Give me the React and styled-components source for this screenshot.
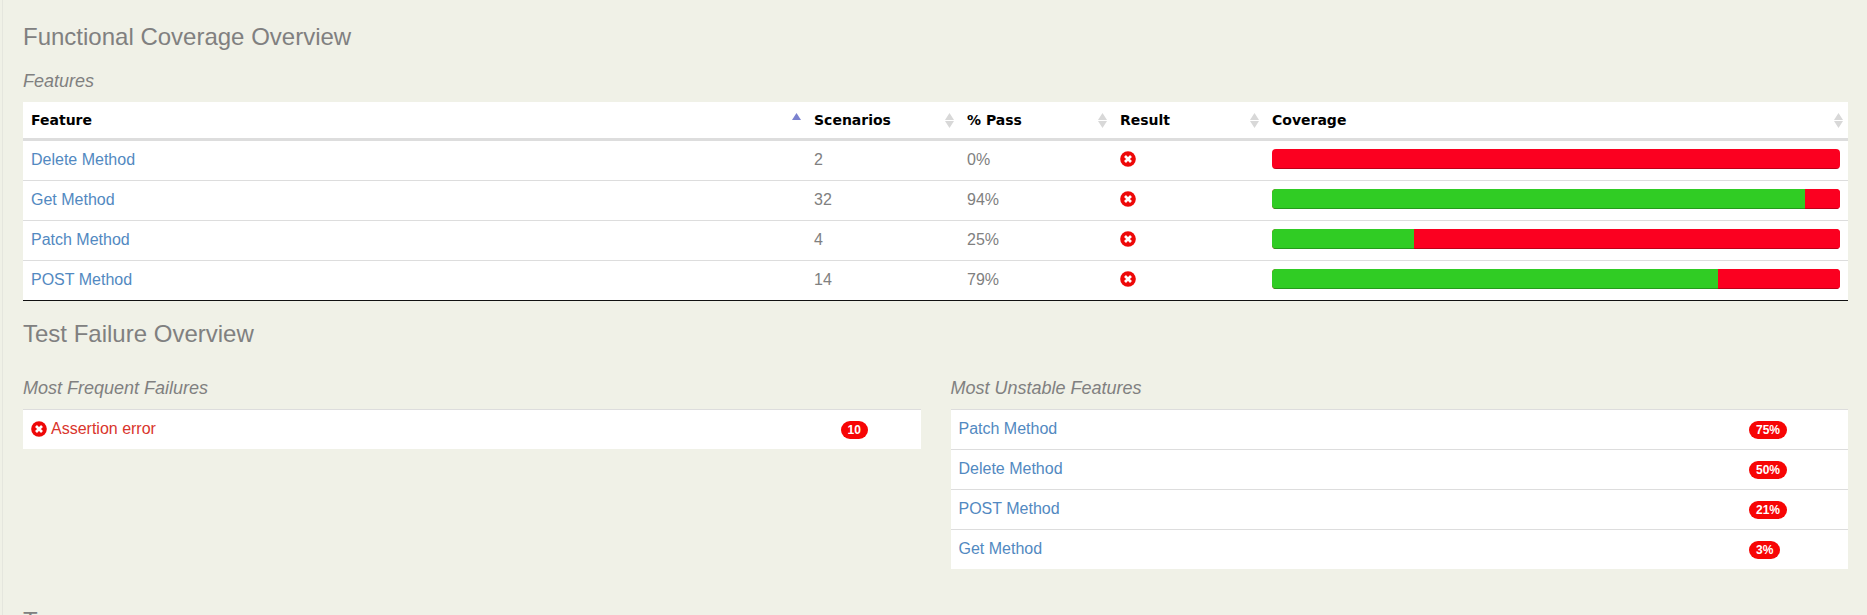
import React, { useState } from "react";
import styled, { createGlobalStyle } from "styled-components";

const GlobalStyle = createGlobalStyle`
  *, *::before, *::after { box-sizing: border-box; }
  html, body { height: 100%; overflow: hidden; }
  body {
    margin: 0;
    background: #f0f1e7;
    color: #808080;
    font: 16px/23px "Liberation Sans", Arial, sans-serif;
  }
  #root { height: 100%; }
`;

const Page = styled.main`
  min-height: 100%;
  margin-left: 2px;
  padding: 23px 19px 0 20px;
  border-left: 1px solid #e5e6de;
`;

const Section = styled.section`
  padding-bottom: ${(p) => p.$space || 0}px;
`;

const Title = styled.h3`
  margin: 0 0 ${(p) => p.$gap}px;
  font-size: 24px;
  line-height: 28px;
  font-weight: 400;
`;

const Subtitle = styled.h4`
  margin: 0 0 11px;
  font-size: 18px;
  line-height: 20px;
  font-weight: 400;
  font-style: italic;
`;

const Table = styled.table`
  width: 100%;
  table-layout: fixed;
  border-collapse: separate;
  border-spacing: 0;
  background: #fff;
`;

const CoverageTable = styled(Table)`
  border-bottom: 1px solid #111;

  tbody tr + tr td { border-top: 1px solid #ddd; }
`;

const RankTable = styled(Table)`
  td { border-top: 1px solid #ddd; }
`;

const Col = styled.col`
  width: ${(p) => p.$width};
`;

const HeadCell = styled.th`
  padding: 0;
  border-bottom: 3px solid #ddd;
`;

const SortButton = styled.button`
  display: flex;
  align-items: center;
  justify-content: space-between;
  width: 100%;
  height: 36px;
  padding: 0 5px 0 8px;
  border: 0;
  background: none;
  color: #000;
  font: bold 14px/20px "DejaVu Sans", Verdana, sans-serif;
  text-align: left;
  cursor: pointer;
`;

const Cell = styled.td`
  padding: 8px 8px 10px;
  line-height: 21px;
  vertical-align: top;
`;

const FeatureLink = styled.a`
  color: #5289c1;
  text-decoration: none;

  &:hover { text-decoration: underline; }
`;

const FailureLink = styled(FeatureLink)`
  display: flex;
  align-items: center;
  gap: 4px;
  color: #d9352c;
`;

const Bar = styled.div`
  display: flex;
  height: 20px;
  overflow: hidden;
  border-radius: 4px;
  background: #fb0020;
`;

const BarPart = styled.div`
  flex: ${(p) => p.$share} 0 0;
  background: ${(p) => p.$color};
  box-shadow: inset 0 -1px 0 rgba(0, 0, 0, 0.25);
`;

const Columns = styled.div`
  display: grid;
  grid-template-columns: 1fr 1fr;
  gap: 30px;
  align-items: start;
`;

const Badge = styled.span`
  display: inline-block;
  padding: 3px 7px;
  border-radius: 10px;
  background: #f70505;
  color: #fff;
  font-size: 12px;
  line-height: 12px;
  font-weight: 700;
  vertical-align: middle;
`;

const FailSvg = styled.svg`
  display: block;
  width: 16px;
  height: 16px;
`;

const ResultIcon = styled.span`
  display: flex;
  align-items: center;
  height: 20px;
`;

function FailIcon() {
  return (
    <FailSvg viewBox="0 0 16 16" aria-label="Failure" role="img">
      <circle cx="8" cy="8" r="7.8" fill="#ee0808" />
      <path d="M5 5l6 6M11 5l-6 6" fill="none" stroke="#fff" strokeWidth="2.7" />
    </FailSvg>
  );
}

function SortIcon({ direction }) {
  return (
    <svg width="9" height="15" viewBox="0 0 9 15" aria-hidden="true">
      {direction !== "descending" && (
        <path d="M4.5 0L9 7H0z" fill={direction ? "#7b82cf" : "#d8d8d8"} />
      )}
      {direction !== "ascending" && (
        <path d="M4.5 15L9 8H0z" fill={direction ? "#7b82cf" : "#d8d8d8"} />
      )}
    </svg>
  );
}

const columns = [
  { key: "name", label: "Feature", width: "auto" },
  { key: "total", label: "Scenarios", width: "153px" },
  { key: "rate", label: "% Pass", width: "153px" },
  { key: "result", label: "Result", width: "152px" },
  { key: "coverage", label: "Coverage", width: "32%" },
];

const features = [
  { name: "Delete Method", total: 2, passed: 0 },
  { name: "Get Method", total: 32, passed: 30 },
  { name: "Patch Method", total: 4, passed: 1 },
  { name: "POST Method", total: 14, passed: 11 },
];

const unstable = [
  ["Patch Method", "75%"],
  ["Delete Method", "50%"],
  ["POST Method", "21%"],
  ["Get Method", "3%"],
];

function sortValue(feature, key) {
  if (key === "name") return feature.name.toLowerCase();
  if (key === "total") return feature.total;
  return feature.passed / feature.total;
}

export default function App() {
  const [sort, setSort] = useState({ key: "name", direction: "ascending" });

  const rows = [...features].sort((a, b) => {
    const x = sortValue(a, sort.key);
    const y = sortValue(b, sort.key);
    const order = x < y ? -1 : x > y ? 1 : 0;
    return sort.direction === "ascending" ? order : -order;
  });

  const toggle = (key) =>
    setSort((s) => ({
      key,
      direction: s.key === key && s.direction === "ascending" ? "descending" : "ascending",
    }));

  return (
    <>
      <GlobalStyle />
      <Page>
        <Section $space={19}>
          <Title $gap={20}>Functional Coverage Overview</Title>
          <Subtitle>Features</Subtitle>
          <CoverageTable>
            <colgroup>
              {columns.map((c) => (
                <Col key={c.key} $width={c.width} />
              ))}
            </colgroup>
            <thead>
              <tr>
                {columns.map((c) => {
                  const direction = sort.key === c.key ? sort.direction : undefined;
                  return (
                    <HeadCell key={c.key} scope="col" aria-sort={direction}>
                      <SortButton type="button" onClick={() => toggle(c.key)}>
                        {c.label}
                        <SortIcon direction={direction} />
                      </SortButton>
                    </HeadCell>
                  );
                })}
              </tr>
            </thead>
            <tbody>
              {rows.map((f) => (
                <tr key={f.name}>
                  <Cell>
                    <FeatureLink href="#feature">{f.name}</FeatureLink>
                  </Cell>
                  <Cell>{f.total}</Cell>
                  <Cell>{Math.round((f.passed / f.total) * 100)}%</Cell>
                  <Cell>
                    <ResultIcon>
                      <FailIcon />
                    </ResultIcon>
                  </Cell>
                  <Cell>
                    <Bar>
                      <BarPart $share={f.passed} $color="#30cc24" />
                      <BarPart $share={f.total - f.passed} $color="#fb0020" />
                    </Bar>
                  </Cell>
                </tr>
              ))}
            </tbody>
          </CoverageTable>
        </Section>

        <Section $space={38}>
          <Title $gap={30}>Test Failure Overview</Title>
          <Columns>
            <div>
              <Subtitle>Most Frequent Failures</Subtitle>
              <RankTable>
                <colgroup>
                  <Col $width="auto" />
                  <Col $width="88px" />
                </colgroup>
                <tbody>
                  <tr>
                    <Cell>
                      <FailureLink href="#failure">
                        <FailIcon />
                        Assertion error
                      </FailureLink>
                    </Cell>
                    <Cell>
                      <Badge>10</Badge>
                    </Cell>
                  </tr>
                </tbody>
              </RankTable>
            </div>
            <div>
              <Subtitle>Most Unstable Features</Subtitle>
              <RankTable>
                <colgroup>
                  <Col $width="auto" />
                  <Col $width="107px" />
                </colgroup>
                <tbody>
                  {unstable.map(([name, rate]) => (
                    <tr key={name}>
                      <Cell>
                        <FeatureLink href="#feature">{name}</FeatureLink>
                      </Cell>
                      <Cell>
                        <Badge>{rate}</Badge>
                      </Cell>
                    </tr>
                  ))}
                </tbody>
              </RankTable>
            </div>
          </Columns>
        </Section>

        <Section>
          <Title $gap={20}>Tags</Title>
        </Section>
      </Page>
    </>
  );
}
